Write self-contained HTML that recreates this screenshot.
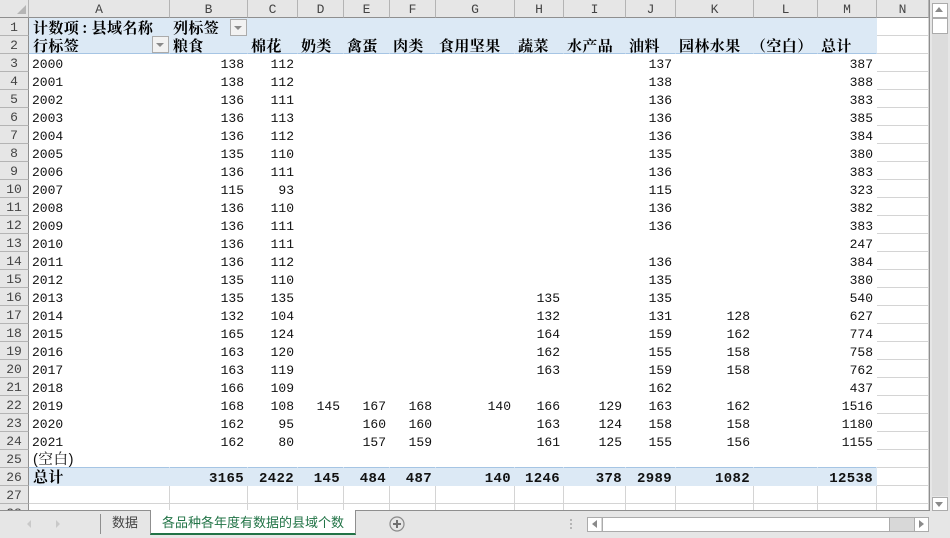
<!DOCTYPE html>
<html lang="zh">
<head>
<meta charset="utf-8">
<style>
html,body{margin:0;padding:0;width:950px;height:538px;overflow:hidden;background:#e6e6e6}
#sheet{position:absolute;left:0;top:0;width:930px;height:511px;overflow:hidden;border-bottom:1px solid #8f8f8f;box-sizing:border-box}
table{border-collapse:separate;border-spacing:0;table-layout:fixed;width:929px;position:absolute;left:0;top:0;font:13px/12px "Liberation Mono",monospace;color:#111}
col.h{width:29px}
th{height:14px;padding:3px 0 0;font:13px/14px "Liberation Mono",monospace;font-weight:normal;text-align:center;background:#e6e6e6;border-right:1px solid #b4b4b4;border-bottom:1px solid #b4b4b4;color:#444;overflow:hidden}
tr.c th{border-right:1px solid #b4b4b4;border-bottom:1px solid #8f8f8f}
th.k{border-right:1px solid #8f8f8f}
td{height:12px;padding:5px 3px 0 0;text-align:right;border-bottom:1px solid transparent;border-right:1px solid transparent;background:#fff;white-space:nowrap;overflow:visible;box-sizing:content-box}
td.a{text-align:left;padding:5px 0 0 3px}
td.n{border-right:1px solid #d4d4d4;border-bottom:1px solid #d4d4d4;padding:0;height:17px}
td.g{border-right:1px solid #d4d4d4;border-bottom:1px solid #d4d4d4}
tr.b td:not(.n){background:#dce9f5;font-weight:bold;font-size:14px;text-align:left}
tr.b td.r{text-align:right;letter-spacing:.35px}
.cj{display:block;height:16px;margin:-4px 0 0;font:bold 15px/17px "Noto Serif CJK SC",serif;letter-spacing:.4px;color:#000}
.cr{display:block;height:14px;margin:-2px 0 0 1px;font:14.5px/15px "Liberation Sans","Noto Serif CJK SC",serif;letter-spacing:.6px}
.co{padding:0 4px 0 3px}
tr.u td:not(.n){border-bottom:1px solid #a6c5e4}
tr.f td:not(.n){border-bottom:1px solid #dce9f5}
.bt{position:absolute;width:15px;height:15px;background:#f2f2f2;border:1px solid #ababab;box-sizing:content-box}
.bt:after{content:"";position:absolute;left:3px;top:6px;border:4px solid transparent;border-top:4px solid #8a8a8a;border-bottom:0}
.abs{position:absolute}
.arrow{position:absolute;width:0;height:0}
</style>
</head>
<body>
<div id="sheet">
<table>
<colgroup><col class="h"><col style="width:141px"><col style="width:78px"><col style="width:50px"><col style="width:46px"><col style="width:46px"><col style="width:46px"><col style="width:79px"><col style="width:49px"><col style="width:62px"><col style="width:50px"><col style="width:78px"><col style="width:64px"><col style="width:59px"><col style="width:52px"></colgroup>
<tr class="c"><th></th><th>A</th><th>B</th><th>C</th><th>D</th><th>E</th><th>F</th><th>G</th><th>H</th><th>I</th><th>J</th><th>K</th><th>L</th><th>M</th><th>N</th></tr>
<tr class="b f"><th class="k">1</th><td class="a"><span class="cj" style="margin-left:1px">计数项<span class="co">:</span>县域名称</span></td><td class="a"><span class="cj">列标签</span></td><td></td><td></td><td></td><td></td><td></td><td></td><td></td><td></td><td></td><td></td><td></td><td class="n"></td></tr>
<tr class="b u"><th class="k">2</th><td class="a"><span class="cj" style="margin-left:1px">行标签</span></td><td class="a"><span class="cj">粮食</span></td><td class="a"><span class="cj">棉花</span></td><td class="a"><span class="cj">奶类</span></td><td class="a"><span class="cj">禽蛋</span></td><td class="a"><span class="cj">肉类</span></td><td class="a"><span class="cj">食用坚果</span></td><td class="a"><span class="cj">蔬菜</span></td><td class="a"><span class="cj">水产品</span></td><td class="a"><span class="cj">油料</span></td><td class="a"><span class="cj">园林水果</span></td><td class="a"><span class="cj" style="margin-left:-6px">（空白）</span></td><td class="a"><span class="cj">总计</span></td><td class="n"></td></tr>
<tr><th class="k">3</th><td class="a">2000</td><td>138</td><td>112</td><td></td><td></td><td></td><td></td><td></td><td></td><td>137</td><td></td><td></td><td>387</td><td class="n"></td></tr>
<tr><th class="k">4</th><td class="a">2001</td><td>138</td><td>112</td><td></td><td></td><td></td><td></td><td></td><td></td><td>138</td><td></td><td></td><td>388</td><td class="n"></td></tr>
<tr><th class="k">5</th><td class="a">2002</td><td>136</td><td>111</td><td></td><td></td><td></td><td></td><td></td><td></td><td>136</td><td></td><td></td><td>383</td><td class="n"></td></tr>
<tr><th class="k">6</th><td class="a">2003</td><td>136</td><td>113</td><td></td><td></td><td></td><td></td><td></td><td></td><td>136</td><td></td><td></td><td>385</td><td class="n"></td></tr>
<tr><th class="k">7</th><td class="a">2004</td><td>136</td><td>112</td><td></td><td></td><td></td><td></td><td></td><td></td><td>136</td><td></td><td></td><td>384</td><td class="n"></td></tr>
<tr><th class="k">8</th><td class="a">2005</td><td>135</td><td>110</td><td></td><td></td><td></td><td></td><td></td><td></td><td>135</td><td></td><td></td><td>380</td><td class="n"></td></tr>
<tr><th class="k">9</th><td class="a">2006</td><td>136</td><td>111</td><td></td><td></td><td></td><td></td><td></td><td></td><td>136</td><td></td><td></td><td>383</td><td class="n"></td></tr>
<tr><th class="k">10</th><td class="a">2007</td><td>115</td><td>93</td><td></td><td></td><td></td><td></td><td></td><td></td><td>115</td><td></td><td></td><td>323</td><td class="n"></td></tr>
<tr><th class="k">11</th><td class="a">2008</td><td>136</td><td>110</td><td></td><td></td><td></td><td></td><td></td><td></td><td>136</td><td></td><td></td><td>382</td><td class="n"></td></tr>
<tr><th class="k">12</th><td class="a">2009</td><td>136</td><td>111</td><td></td><td></td><td></td><td></td><td></td><td></td><td>136</td><td></td><td></td><td>383</td><td class="n"></td></tr>
<tr><th class="k">13</th><td class="a">2010</td><td>136</td><td>111</td><td></td><td></td><td></td><td></td><td></td><td></td><td></td><td></td><td></td><td>247</td><td class="n"></td></tr>
<tr><th class="k">14</th><td class="a">2011</td><td>136</td><td>112</td><td></td><td></td><td></td><td></td><td></td><td></td><td>136</td><td></td><td></td><td>384</td><td class="n"></td></tr>
<tr><th class="k">15</th><td class="a">2012</td><td>135</td><td>110</td><td></td><td></td><td></td><td></td><td></td><td></td><td>135</td><td></td><td></td><td>380</td><td class="n"></td></tr>
<tr><th class="k">16</th><td class="a">2013</td><td>135</td><td>135</td><td></td><td></td><td></td><td></td><td>135</td><td></td><td>135</td><td></td><td></td><td>540</td><td class="n"></td></tr>
<tr><th class="k">17</th><td class="a">2014</td><td>132</td><td>104</td><td></td><td></td><td></td><td></td><td>132</td><td></td><td>131</td><td>128</td><td></td><td>627</td><td class="n"></td></tr>
<tr><th class="k">18</th><td class="a">2015</td><td>165</td><td>124</td><td></td><td></td><td></td><td></td><td>164</td><td></td><td>159</td><td>162</td><td></td><td>774</td><td class="n"></td></tr>
<tr><th class="k">19</th><td class="a">2016</td><td>163</td><td>120</td><td></td><td></td><td></td><td></td><td>162</td><td></td><td>155</td><td>158</td><td></td><td>758</td><td class="n"></td></tr>
<tr><th class="k">20</th><td class="a">2017</td><td>163</td><td>119</td><td></td><td></td><td></td><td></td><td>163</td><td></td><td>159</td><td>158</td><td></td><td>762</td><td class="n"></td></tr>
<tr><th class="k">21</th><td class="a">2018</td><td>166</td><td>109</td><td></td><td></td><td></td><td></td><td></td><td></td><td>162</td><td></td><td></td><td>437</td><td class="n"></td></tr>
<tr><th class="k">22</th><td class="a">2019</td><td>168</td><td>108</td><td>145</td><td>167</td><td>168</td><td>140</td><td>166</td><td>129</td><td>163</td><td>162</td><td></td><td>1516</td><td class="n"></td></tr>
<tr><th class="k">23</th><td class="a">2020</td><td>162</td><td>95</td><td></td><td>160</td><td>160</td><td></td><td>163</td><td>124</td><td>158</td><td>158</td><td></td><td>1180</td><td class="n"></td></tr>
<tr><th class="k">24</th><td class="a">2021</td><td>162</td><td>80</td><td></td><td>157</td><td>159</td><td></td><td>161</td><td>125</td><td>155</td><td>156</td><td></td><td>1155</td><td class="n"></td></tr>
<tr class="u"><th class="k">25</th><td class="a"><span class="cr">(空白)</span></td><td></td><td></td><td></td><td></td><td></td><td></td><td></td><td></td><td></td><td></td><td></td><td></td><td class="n"></td></tr>
<tr class="b f"><th class="k">26</th><td class="a"><span class="cj" style="margin:-5px 0 0 1px;height:17px">总计</span></td><td class="r">3165</td><td class="r">2422</td><td class="r">145</td><td class="r">484</td><td class="r">487</td><td class="r">140</td><td class="r">1246</td><td class="r">378</td><td class="r">2989</td><td class="r">1082</td><td class="r"></td><td class="r">12538</td><td class="n"></td></tr>
<tr><th class="k">27</th><td class="g"></td><td class="g"></td><td class="g"></td><td class="g"></td><td class="g"></td><td class="g"></td><td class="g"></td><td class="g"></td><td class="g"></td><td class="g"></td><td class="g"></td><td class="g"></td><td class="g"></td><td class="n"></td></tr>
<tr><th class="k">28</th><td class="g"></td><td class="g"></td><td class="g"></td><td class="g"></td><td class="g"></td><td class="g"></td><td class="g"></td><td class="g"></td><td class="g"></td><td class="g"></td><td class="g"></td><td class="g"></td><td class="g"></td><td class="n"></td></tr>
</table>
<div class="arrow" style="left:17px;top:5px;border-left:9px solid transparent;border-bottom:9px solid #b5b5b5"></div>
<div class="bt" style="left:230px;top:19px"></div>
<div class="bt" style="left:152px;top:36px"></div>
</div>

<!-- vertical scrollbar -->
<div class="abs" style="left:929px;top:0;width:1px;height:511px;background:#8f8f8f"></div>
<div class="abs" style="left:930px;top:0;width:20px;height:511px;background:#e6e6e6"></div>
<div class="abs" style="left:932px;top:18px;width:16px;height:478px;background:#dcdcdc"></div>
<div class="abs" style="left:932px;top:3px;width:14px;height:13px;background:#fff;border:1px solid #ababab"></div>
<div class="arrow" style="left:935px;top:7px;border:4.5px solid transparent;border-top:0;border-bottom:5px solid #8a8a8a"></div>
<div class="abs" style="left:932px;top:18px;width:14px;height:14px;background:#fff;border:1px solid #ababab"></div>
<div class="abs" style="left:932px;top:497px;width:14px;height:12px;background:#fff;border:1px solid #ababab"></div>
<div class="arrow" style="left:935px;top:502px;border:4.5px solid transparent;border-bottom:0;border-top:5px solid #8a8a8a"></div>

<!-- tab bar -->
<div class="arrow" style="left:27px;top:520px;border:4px solid transparent;border-left:0;border-right:4px solid #c9c9c9"></div>
<div class="arrow" style="left:56px;top:520px;border:4px solid transparent;border-right:0;border-left:4px solid #c9c9c9"></div>
<div class="abs" style="left:100px;top:514px;width:1px;height:20px;background:#8f8f8f"></div>
<div class="abs" style="left:112px;top:513px;height:18px;font:13px/18px 'Noto Sans CJK SC',sans-serif;color:#444;white-space:nowrap">数据</div>
<div class="abs" style="left:150px;top:510px;width:204px;height:23px;background:#fff;border-left:1px solid #8f8f8f;border-right:1px solid #8f8f8f;border-bottom:2px solid #217346"></div>
<div class="abs" style="left:162px;top:513px;height:18px;font:13px/18px 'Noto Sans CJK SC',sans-serif;color:#217346;white-space:nowrap">各品种各年度有数据的县域个数</div>
<svg class="abs" style="left:388px;top:515px" width="18" height="18" viewBox="0 0 18 18"><circle cx="9" cy="9" r="7" fill="none" stroke="#8a8a8a" stroke-width="1.2"/><path d="M5 9H13M9 5V13" stroke="#6f6f6f" stroke-width="2"/></svg>
<div class="abs" style="left:570px;top:519px;width:2px;height:2px;background:#b5b5b5;box-shadow:0 4px 0 #b5b5b5,0 8px 0 #b5b5b5"></div>

<!-- horizontal scrollbar -->
<div class="abs" style="left:587px;top:517px;width:340px;height:13px;background:#d8d8d8;border:1px solid #ababab"></div>
<div class="abs" style="left:588px;top:518px;width:13px;height:13px;background:#fff"></div>
<div class="arrow" style="left:592px;top:520px;border:4.5px solid transparent;border-left:0;border-right:5px solid #8a8a8a"></div>
<div class="abs" style="left:602px;top:517px;width:286px;height:13px;background:#fff;border:1px solid #ababab"></div>
<div class="abs" style="left:914px;top:518px;width:13px;height:13px;background:#fff;border-left:1px solid #ababab"></div>
<div class="arrow" style="left:919px;top:520px;border:4.5px solid transparent;border-right:0;border-left:5px solid #8a8a8a"></div>
</body>
</html>
